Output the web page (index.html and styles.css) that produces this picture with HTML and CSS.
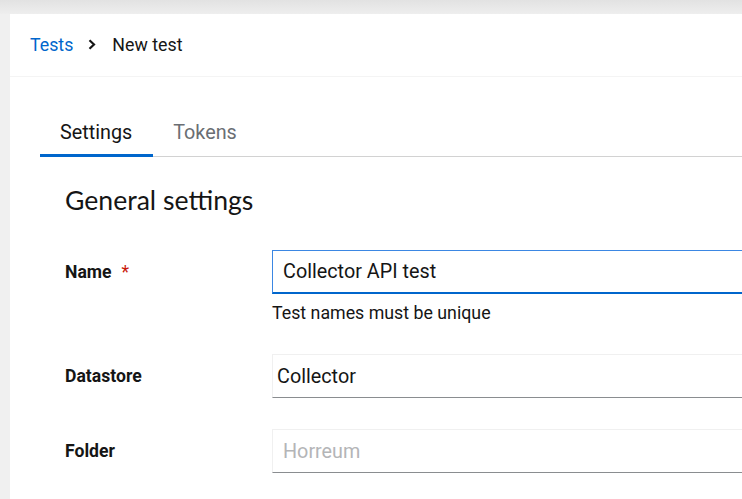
FILE: index.html
```html
<!DOCTYPE html>
<html lang="en">
<head>
<meta charset="utf-8">
<title>New test</title>
<link rel="stylesheet" href="styles.css">
</head>
<body>
<div class="topbar"></div>
<div class="page">
  <div class="gutter"></div>
  <div class="panel">
    <nav class="breadcrumb">
      <a class="crumb-link" href="#">Tests</a>
      <svg class="crumb-sep" width="8" height="11" viewBox="0 0 8 11" aria-hidden="true"><path d="M1.5 1.2 L6 5.5 L1.5 9.8" fill="none" stroke="#151515" stroke-width="2.2"/></svg>
      <span class="crumb-current">New test</span>
    </nav>
    <main class="main">
      <div class="tabs">
        <button class="tab tab-active">Settings</button>
        <button class="tab">Tokens</button>
      </div>
      <section class="settings">
        <h2 class="heading">General settings</h2>
        <div class="form">
          <div class="field-label">Name<span class="required">*</span></div>
          <div class="field-control">
            <div class="input input-focus">Collector API test</div>
            <div class="helper">Test names must be unique</div>
          </div>
          <div class="field-label">Datastore</div>
          <div class="field-control">
            <div class="input input-select">Collector</div>
          </div>
          <div class="field-label">Folder</div>
          <div class="field-control">
            <div class="input input-placeholder">Horreum</div>
          </div>
        </div>
      </section>
    </main>
  </div>
</div>
</body>
</html>
```
FILE: styles.css
```css
html, body {
  margin: 0;
  padding: 0;
  width: 742px;
  height: 499px;
  overflow: hidden;
  background: #f0f0f0;
  font-family: Roboto, "Liberation Sans", sans-serif;
  color: #151515;
}

.topbar {
  height: 14px;
  background: linear-gradient(#e2e2e2, #eeeeee);
}

.page {
  display: flex;
  height: 485px;
}

.gutter {
  width: 10px;
  flex: none;
  background: #f0f0f0;
}

.panel {
  flex: 1;
  background: #ffffff;
  min-width: 0;
  overflow: hidden;
}

.breadcrumb {
  height: 61px;
  display: flex;
  align-items: center;
  padding-left: 20px;
  padding-bottom: 1px;
  box-sizing: content-box;
  font-size: 17.8px;
  border-bottom: 1px solid #f4f4f4;
}

.crumb-link {
  color: #0066cc;
  text-decoration: none;
}

.crumb-sep {
  margin: 0 16px 0 15px;
}

.crumb-current {
  color: #151515;
}

.main {
  padding: 31px 0 0 30px;
}

.tabs {
  display: flex;
  border-bottom: 1px solid #d2d2d2;
}

.tab {
  position: relative;
  font-family: Roboto, "Liberation Sans", sans-serif;
  font-size: 19.8px;
  line-height: 24px;
  padding: 13px 21px 11px 20px;
  border: 0;
  background: none;
  color: #6a6e73;
  cursor: pointer;
}

.tab-active {
  color: #151515;
}

.tab-active::after {
  content: "";
  position: absolute;
  left: 0;
  right: 0;
  bottom: -1px;
  height: 3px;
  background: #0066cc;
}

.settings {
  padding-left: 25px;
}

.heading {
  margin: 28px 0 0 0;
  font-family: Lato, "Noto Sans", sans-serif;
  font-weight: 400;
  font-size: 26.6px;
  line-height: 31px;
  color: #151515;
}

.form {
  margin-top: 34px;
  display: grid;
  grid-template-columns: 207px 700px;
  row-gap: 31px;
}

.field-label {
  height: 44px;
  display: flex;
  align-items: center;
  font-weight: 700;
  font-size: 17.6px;
}

.required {
  color: #c9190b;
  font-weight: 400;
  margin-left: 10px;
}

.input {
  box-sizing: border-box;
  height: 44px;
  display: flex;
  align-items: center;
  padding-left: 10px;
  font-size: 19.8px;
  border-top: 1px solid #f0f0f0;
  border-left: 1px solid #f0f0f0;
  border-bottom: 1px solid #8a8d90;
}

.input-focus {
  border-top: 1px solid #3b87e3;
  border-left: 1px solid #3b87e3;
  border-bottom: 2px solid #0066cc;
}

.input-select {
  padding-left: 4px;
}

.input-placeholder {
  color: #b4b5b7;
}

.helper {
  margin-top: 8px;
  font-size: 17.8px;
  line-height: 21px;
  color: #151515;
}
```
